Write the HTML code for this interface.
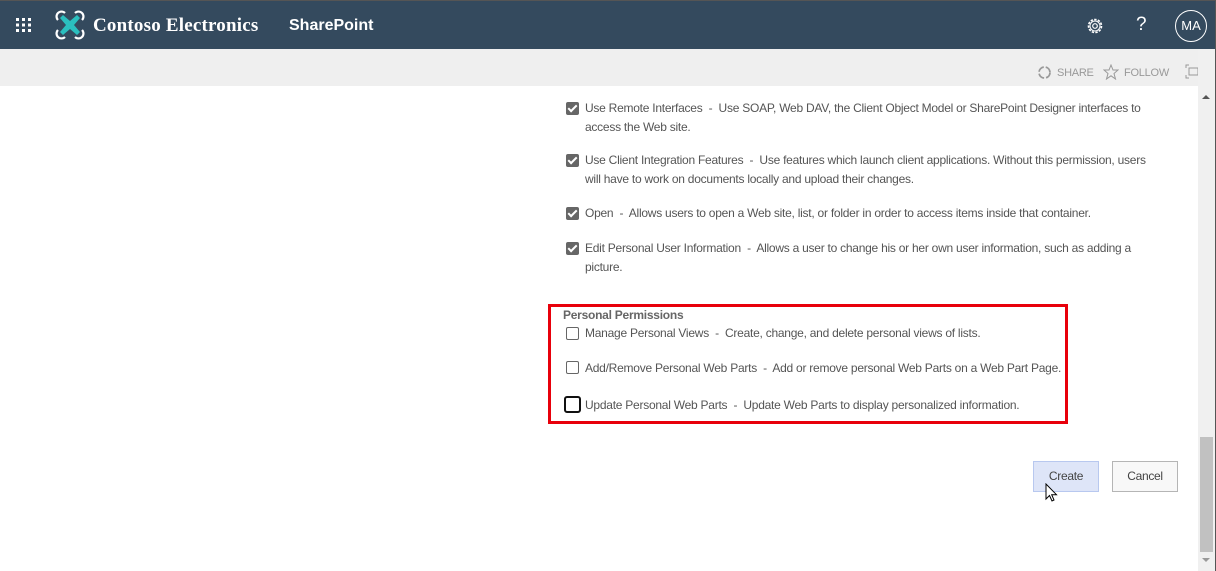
<!DOCTYPE html>
<html><head><meta charset="utf-8">
<style>
*{margin:0;padding:0;box-sizing:border-box}
body{width:1216px;height:571px;overflow:hidden;background:#fff;font-family:"Liberation Sans",sans-serif;position:relative;color:#444}
.hdr{position:absolute;left:0;top:0;width:1216px;height:49px;background:#344a5e;border-top:1px solid #555}
.bar{position:absolute;left:0;top:49px;width:1198px;height:37px;background:#efefef}
.t{position:absolute;font-size:12px;letter-spacing:-0.25px;white-space:nowrap;color:#555;line-height:14px}
.cb{position:absolute;width:13px;height:13px;border-radius:2px}
.on{background:#666}
.on::after{content:"";position:absolute;left:4px;top:1px;width:3px;height:7px;border:solid #fff;border-width:0 2px 2px 0;transform:rotate(45deg)}
.off{border:1px solid #666;background:#fff}
.btn{position:absolute;top:461px;width:66px;height:31px;font-size:12px;letter-spacing:-0.3px;color:#444;text-align:center;line-height:29px}
</style></head><body>
<div class="hdr">
  <svg style="position:absolute;left:16px;top:17px" width="16" height="14"><g fill="#fff">
  <rect x="0" y="0" width="3" height="3"/><rect x="6" y="0" width="3" height="3"/><rect x="12" y="0" width="3" height="3"/>
  <rect x="0" y="5.5" width="3" height="3"/><rect x="6" y="5.5" width="3" height="3"/><rect x="12" y="5.5" width="3" height="3"/>
  <rect x="0" y="11" width="3" height="3"/><rect x="6" y="11" width="3" height="3"/><rect x="12" y="11" width="3" height="3"/></g></svg>
  <svg style="position:absolute;left:55px;top:9px" width="30" height="30" viewBox="0 0 30 30">
   <path d="M8 5 L15 11 L22 5 L25 8 L19 15 L25 22 L22 25 L15 19 L8 25 L5 22 L11 15 L5 8Z" fill="#2bbfbf"/>
   <g fill="none" stroke="#fff" stroke-width="2.2"><path d="M10 3 A4 4 0 1 0 3 10"/><path d="M20 3 A4 4 0 1 1 27 10"/><path d="M10 27 A4 4 0 1 1 3 20"/><path d="M20 27 A4 4 0 1 0 27 20"/></g>
  </svg>
  <div style="position:absolute;left:93px;top:14px;color:#fff;font-family:'Liberation Serif',serif;font-size:19px;font-weight:bold;letter-spacing:0.2px">Contoso Electronics</div>
  <div style="position:absolute;left:289px;top:16px;color:#fff;font-size:16px;font-weight:bold">SharePoint</div>
  <svg style="position:absolute;left:1086px;top:16px" width="18" height="18" viewBox="0 0 18 18"><circle cx="9" cy="9" r="6.5" fill="none" stroke="#fff" stroke-width="1.6" stroke-dasharray="2.4 1.3"/><circle cx="9" cy="9" r="5" fill="none" stroke="#fff" stroke-width="1"/><circle cx="9" cy="9" r="2.3" fill="none" stroke="#fff" stroke-width="1.2"/></svg>
  <div style="position:absolute;left:1136px;top:13px;color:#fff;font-size:19px">?</div>
  <div style="position:absolute;left:1175px;top:9px;width:32px;height:32px;border:1.5px solid #fff;border-radius:50%;color:#fff;font-size:13px;text-align:center;line-height:29px">MA</div>
</div>
<div class="bar">
  <svg style="position:absolute;left:1037px;top:16px" width="15" height="15"><circle cx="7.5" cy="7.5" r="5.5" fill="none" stroke="#999" stroke-width="1.8" stroke-dasharray="7 2"/></svg>
  <div class="t" style="left:1057px;top:17px;color:#999;font-size:11px">SHARE</div>
  <svg style="position:absolute;left:1103px;top:15px" width="16" height="16" viewBox="0 0 16 16"><path d="M8 1 L10 6 L15 6 L11 9.5 L12.5 15 L8 11.8 L3.5 15 L5 9.5 L1 6 L6 6Z" fill="none" stroke="#999"/></svg>
  <div class="t" style="left:1124px;top:17px;color:#999;font-size:11px">FOLLOW</div>
  <svg style="position:absolute;left:1185px;top:15px" width="17" height="15"><path d="M1 4V1H4M13 1H16V4M16 11V14H13M4 14H1V11" fill="none" stroke="#999"/><rect x="4" y="4" width="9" height="7" fill="none" stroke="#999"/></svg>
</div>
<div style="position:absolute;left:1198px;top:49px;width:17px;height:522px;background:#f0f0f0"></div>
<div style="position:absolute;left:1200px;top:437px;width:13px;height:115px;background:#c1c1c1"></div>
<div style="position:absolute;left:1202px;top:95px;border:4px solid transparent;border-bottom:4px solid #555;border-top:0"></div>
<div style="position:absolute;left:1202px;top:558px;border:4px solid transparent;border-top:4px solid #999;border-bottom:0"></div>
<div style="position:absolute;left:1215px;top:0;width:1px;height:571px;background:#555"></div>

<div class="cb on" style="left:566px;top:102px"></div>
<div class="t" style="left:585px;top:101px">Use Remote Interfaces&nbsp; -&nbsp; Use SOAP, Web DAV, the Client Object Model or SharePoint Designer interfaces to</div>
<div class="t" style="left:585px;top:120px">access the Web site.</div>
<div class="cb on" style="left:566px;top:154px"></div>
<div class="t" style="left:585px;top:153px">Use Client Integration Features&nbsp; -&nbsp; Use features which launch client applications. Without this permission, users</div>
<div class="t" style="left:585px;top:172px">will have to work on documents locally and upload their changes.</div>
<div class="cb on" style="left:566px;top:207px"></div>
<div class="t" style="left:585px;top:206px">Open&nbsp; -&nbsp; Allows users to open a Web site, list, or folder in order to access items inside that container.</div>
<div class="cb on" style="left:566px;top:242px"></div>
<div class="t" style="left:585px;top:241px">Edit Personal User Information&nbsp; -&nbsp; Allows a user to change his or her own user information, such as adding a</div>
<div class="t" style="left:585px;top:260px">picture.</div>

<div style="position:absolute;left:548px;top:304px;width:520px;height:120px;border:3px solid #e8000b"></div>
<div class="t" style="left:563px;top:308px;font-weight:bold;color:#666">Personal Permissions</div>
<div class="cb off" style="left:566px;top:327px"></div>
<div class="t" style="left:585px;top:326px">Manage Personal Views&nbsp; -&nbsp; Create, change, and delete personal views of lists.</div>
<div class="cb off" style="left:566px;top:361px"></div>
<div class="t" style="left:585px;top:361px">Add/Remove Personal Web Parts&nbsp; -&nbsp; Add or remove personal Web Parts on a Web Part Page.</div>
<div class="cb off" style="left:564px;top:396px;width:17px;height:17px;border:2px solid #111;border-radius:3px"></div>
<div class="t" style="left:585px;top:398px">Update Personal Web Parts&nbsp; -&nbsp; Update Web Parts to display personalized information.</div>

<div class="btn" style="left:1033px;background:#dee5f8;border:1px solid #b8c8ef">Create</div>
<div class="btn" style="left:1112px;background:#f8f8f8;border:1px solid #b5b5b5">Cancel</div>
<svg style="position:absolute;left:1045px;top:483px" width="14" height="20" viewBox="0 0 14 20"><path d="M1 1 L1 16 L4.5 12.5 L7 18 L9 17 L6.7 11.7 L11.5 11.7Z" fill="#fff" stroke="#000"/></svg>
</body></html>
